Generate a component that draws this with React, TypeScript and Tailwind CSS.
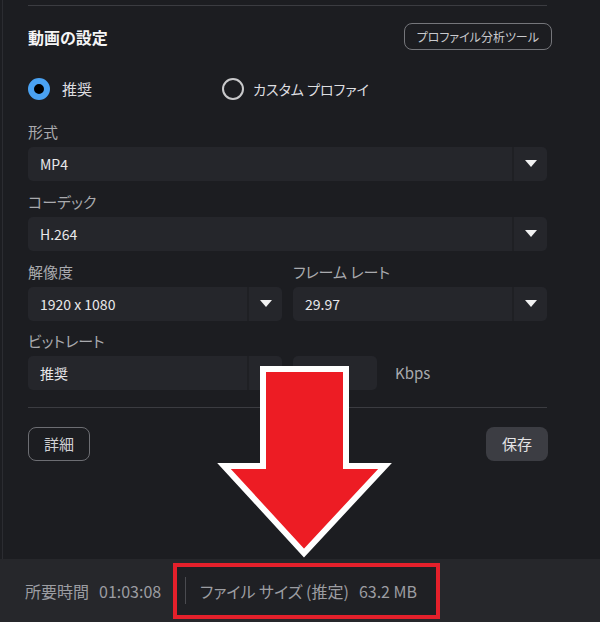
const font = "[font-family:'Noto_Sans_CJK_JP','Noto_Sans',sans-serif] [font-feature-settings:'palt']";

function Caret() {
  return (
    <svg width="12" height="8" viewBox="0 0 12 8">
      <polygon points="0,0 12,0 6,7" fill="#f2f2f2" />
    </svg>
  );
}

function Select({ value, className = "" }: { value: string; className?: string }) {
  return (
    <div className={`flex h-[34px] rounded-[5px] bg-[#25262b] ${className}`}>
      <div className="flex flex-1 items-center pl-[12px] text-[14px] text-[#e8e8ea]">{value}</div>
      <div className="flex w-[35px] items-center justify-center border-l-2 border-[#1f2024]">
        <Caret />
      </div>
    </div>
  );
}

function Field({ label, children, className = "" }: { label: string; children: React.ReactNode; className?: string }) {
  return (
    <div className={className}>
      <div className="mb-[4px] flex h-[22px] items-center text-[15px] text-[#a9aaae]">{label}</div>
      {children}
    </div>
  );
}

export default function App() {
  return (
    <div className={`relative flex h-[622px] w-[600px] flex-col overflow-hidden bg-[#1c1d21] ${font}`}>
      <div className="ml-[2px] flex flex-1 border-l border-[#2b2c31] pl-[25px] pr-[53px]">
        <div className="flex flex-1 flex-col pt-[5px]">
          <div className="border-t border-[#3b3c41]" />

          <div className="mt-[17px] flex h-[27px] items-center justify-between">
            <span className="text-[16px] font-bold text-[#f4f4f5]">動画の設定</span>
            <button className="-mr-[5px] h-[27px] rounded-[8px] border border-[#75767b] px-[12px] text-[12px] text-[#c9cacd]">
              プロファイル分析ツール
            </button>
          </div>

          <div className="mt-[28px] flex h-[22px] items-center">
            <div className="flex w-[194px] items-center">
              <span className="h-[22px] w-[22px] rounded-full border-[6px] border-[#4aa2f2] bg-black" />
              <span className="ml-[12px] text-[15px] text-[#dedee0]">推奨</span>
            </div>
            <div className="flex items-center">
              <span className="h-[22px] w-[22px] rounded-full border-2 border-[#c9c9cb]" />
              <span className="ml-[9px] text-[14px] text-[#dedee0]">カスタム プロファイ</span>
            </div>
          </div>

          <Field label="形式" className="mt-[21px]">
            <Select value="MP4" />
          </Field>
          <Field label="コーデック" className="mt-[10px]">
            <Select value="H.264" />
          </Field>

          <div className="mt-[10px] grid grid-cols-2 gap-[11px]">
            <Field label="解像度">
              <Select value="1920 x 1080" />
            </Field>
            <Field label="フレーム レート">
              <Select value="29.97" />
            </Field>
          </div>

          <div className="mt-[9px] grid grid-cols-2 gap-[11px]">
            <Field label="ビットレート">
              <Select value="推奨" />
            </Field>
            <div className="flex items-end">
              <div className="h-[34px] w-[84px] rounded-[5px] bg-[#25262b]" />
              <span className="ml-[18px] flex h-[34px] items-center text-[15px] text-[#a9aaae]">Kbps</span>
            </div>
          </div>

          <div className="mt-[17px] border-t border-[#3b3c41]" />

          <div className="mt-[19px] flex items-center justify-between">
            <button className="h-[34px] w-[62px] rounded-[8px] border border-[#6d6e73] text-[15px] text-[#cfd0d3]">詳細</button>
            <button className="-mr-[1px] h-[34px] w-[62px] rounded-[8px] bg-[#3c3d43] text-[15px] text-[#e4e4e6]">保存</button>
          </div>
        </div>
      </div>

      <div className="flex h-[63px] items-center bg-[#26272b] pl-[25px] text-[16px] text-[#9c9da2]">
        <div className="flex w-[148px] items-center">
          <span>所要時間</span>
          <span className="ml-[10px]">01:03:08</span>
        </div>
        <div className="flex h-[56px] w-[267px] items-center border-[4px] border-[#e4202b] bg-[#1f2024] pl-[8px]">
          <span className="h-[27px] border-l border-[#4a4b50]" />
          <span className="ml-[14px]">ファイル サイズ (推定)</span>
          <span className="ml-[10px]">63.2 MB</span>
        </div>
      </div>

      <svg className="pointer-events-none absolute left-0 top-0" width="600" height="622" viewBox="0 0 600 622">
        <polygon
          points="263,369 346,369 346,466 385,466 304,553 224,466 263,466"
          fill="#ed1c24"
          stroke="#ffffff"
          strokeWidth="6"
          strokeLinejoin="miter"
        />
      </svg>
    </div>
  );
}
